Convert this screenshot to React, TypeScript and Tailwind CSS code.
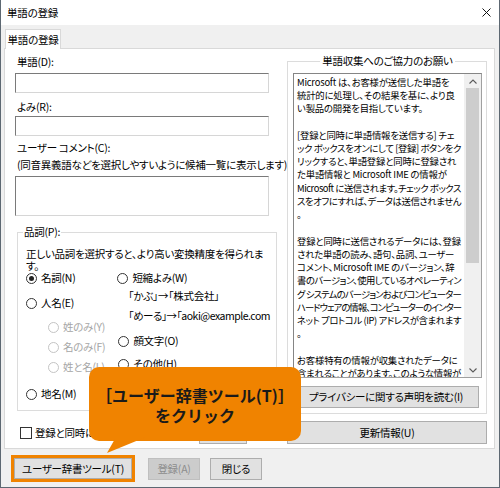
import React, { useLayoutEffect, useRef } from "react";

const msgLines = [
  "Microsoft は、お客様が送信した単語を",
  "統計的に処理し、その結果を基に、より良",
  "い製品の開発を目指しています。",
  "",
  "[登録と同時に単語情報を送信する] チェ",
  "ック ボックスをオンにして [登録] ボタンをク",
  "リックすると、単語登録と同時に登録され",
  "た単語情報と Microsoft IME の情報が",
  "Microsoft に送信されます。チェック ボックス",
  "スをオフにすれば、データは送信されません",
  "。",
  "",
  "登録と同時に送信されるデータには、登録",
  "された単語の読み、語句、品詞、ユーザー",
  "コメント、Microsoft IME のバージョン、辞",
  "書のバージョン、使用しているオペレーティン",
  "グ システムのバージョンおよびコンピューター",
  "ハードウェアの情報、コンピューターのインター",
  "ネット プロトコル (IP) アドレスが含まれます",
  "。",
  "",
  "お客様特有の情報が収集されたデータに",
  "含まれることがあります。このような情報が",
];

function Radio({ label, checked, disabled, className }: { label: string; checked?: boolean; disabled?: boolean; className?: string }) {
  return (
    <div className={`flex items-center h-[14px] gap-[4px] ${className ?? ""}`}>
      <span
        className={`w-[11px] h-[11px] rounded-full border bg-white flex items-center justify-center ${
          disabled ? "border-[#c4c4c4]" : "border-[#333333]"
        }`}
      >
        {checked && <span className="w-[5px] h-[5px] rounded-full bg-[#222222]" />}
      </span>
      <span className={`whitespace-nowrap ${disabled ? "text-[#a6a6a6]" : "text-black"}`}>{label}</span>
    </div>
  );
}

function Chevron({ up }: { up?: boolean }) {
  return (
    <svg width="8" height="5" viewBox="0 0 8 5">
      <polyline
        points={up ? "0.5,4.5 4,1 7.5,4.5" : "0.5,0.5 4,4 7.5,0.5"}
        fill="none"
        stroke="#5a5a5a"
        strokeWidth="1.1"
      />
    </svg>
  );
}

const sunken =
  "bg-white border border-t-[#7a7a7a] border-l-[#7a7a7a] border-r-[#d6d6d6] border-b-[#d6d6d6]";

export default function App() {
  const textRef = useRef<HTMLDivElement>(null);

  // squeeze the lines that run past the scroll box, like the narrow UI font does
  useLayoutEffect(() => {
    const box = textRef.current;
    if (!box) return;
    const max = 164;
    box.querySelectorAll<HTMLSpanElement>("span[data-line]").forEach((s) => {
      const w = s.getBoundingClientRect().width;
      if (w > max) {
        const n = (s.textContent ?? "").length || 1;
        s.style.letterSpacing = `${-0.2 + (max - w) / n}px`;
      }
    });
  }, []);

  return (
    <div className="relative w-[500px] h-[488px] overflow-hidden bg-[#f0f0f0] border-x border-b border-[#5d6872] text-[10.5px] tracking-[-0.25px] text-black font-['Noto_Sans_CJK_JP',sans-serif] [font-feature-settings:'palt']">
      {/* title bar */}
      <div className="h-[25px] bg-white flex items-center justify-between pl-[6px] pr-[8px]">
        <span className="text-[10.5px] tracking-[-0.2px]">単語の登録</span>
        <svg width="9" height="9" viewBox="0 0 9 9">
          <path d="M0.5 0.5 L8.5 8.5 M8.5 0.5 L0.5 8.5" stroke="#111" strokeWidth="1" />
        </svg>
      </div>

      {/* tab strip */}
      <div className="h-[23px] pt-[4px] pl-[4px]">
        <div className="relative z-10 w-[56px] h-[20px] bg-white border-l border-t border-r border-[#d9d9d9] flex items-center justify-center">
          単語の登録
        </div>
      </div>

      {/* tab panel */}
      <div className="ml-[3px] w-[491px] h-[401px] bg-white border border-[#d9d9d9] pt-[5px] pl-[10px] pr-[7px] flex gap-[10px]">
        {/* left column */}
        <div className="w-[262px] min-w-0 pt-[1px] flex flex-col">
          <div className="h-[14px] leading-[14px] ml-[2px]">単語(D):</div>
          <div className={`mt-[4px] w-[254px] h-[20px] ${sunken}`} />
          <div className="mt-[7px] h-[14px] leading-[14px] ml-[2px]">よみ(R):</div>
          <div className={`mt-[2px] w-[254px] h-[20px] ${sunken}`} />
          <div className="mt-[5px] h-[14px] leading-[14px] ml-[2px]">ユーザー コメント(C):</div>
          <div className="mt-[3px] h-[14px] leading-[14px] ml-[2px] whitespace-nowrap">
            (同音異義語などを選択しやすいように候補一覧に表示します)
          </div>
          <div className={`mt-[4px] w-[254px] h-[40px] ${sunken}`} />

          <fieldset className="mt-[9px] ml-[2px] w-[260px] min-w-0 border border-[#dcdcdc] pl-[8px] pr-[6px] pt-[9px] pb-[9px]">
            <legend className="-ml-[3px] px-[1px] h-[14px] leading-[14px]">品詞(P):</legend>
            <div className="leading-[11.5px]">
              <div className="whitespace-nowrap">正しい品詞を選択すると、より高い変換精度を得られま</div>
              <div>す。</div>
            </div>
            <div className="flex">
              <div className="w-[93px] flex flex-col">
                <Radio label="名詞(N)" checked />
                <Radio label="人名(E)" className="mt-[11px]" />
                <Radio label="姓のみ(Y)" disabled className="mt-[10px] ml-[22px]" />
                <Radio label="名のみ(F)" disabled className="mt-[6px] ml-[22px]" />
                <Radio label="姓と名(L)" disabled className="mt-[6px] ml-[22px]" />
                <Radio label="地名(M)" className="mt-[13px]" />
              </div>
              <div className="flex flex-col">
                <Radio label="短縮よみ(W)" />
                <div className="mt-[4px] ml-[11px] h-[14px] leading-[14px] whitespace-nowrap">「かぶ」→「株式会社」</div>
                <div className="mt-[6px] ml-[11px] h-[14px] leading-[14px] whitespace-nowrap tracking-[-0.5px]">「めーる」→「aoki@example.com</div>
                <Radio label="顔文字(O)" className="mt-[11px] ml-[1px]" />
                <Radio label="その他(H)" className="mt-[9px] ml-[1px]" />
              </div>
            </div>
          </fieldset>

          <div className="mt-[10px] h-[23px] flex items-center">
            <span className="ml-[5px] w-[12px] h-[12px] border border-[#333333] bg-white" />
            <span className="ml-[3px] whitespace-nowrap">登録と同時に単語情報を送信する(S)</span>
            <div className="ml-auto mr-[30px] w-[48px] h-[23px] bg-[#e1e1e1] border border-[#adadad]" />
          </div>
        </div>

        {/* right column */}
        <div className="w-[200px] min-w-0 flex flex-col">
          <fieldset className="w-[200px] min-w-0 border border-[#dcdcdc] pl-[5px] pr-[4px] pt-[5px] pb-[5px]">
            <legend className="mx-auto px-[2px] h-[14px] leading-[14px]">単語収集へのご協力のお願い</legend>
            <div className="w-[189px] h-[305px] flex border border-[#a0a0a0] border-t-[#858585] border-l-[#858585] bg-white">
              <div
                ref={textRef}
                className="flex-1 min-w-0 overflow-hidden pl-[3px] pt-[1.5px] text-[9.4px] tracking-[-0.2px] leading-[13.25px]"
              >
                {msgLines.map((l, i) => (
                  <div key={i} className="whitespace-nowrap h-[13.25px]">
                    {l === "" ? "\u00a0" : <span data-line="">{l}</span>}
                  </div>
                ))}
              </div>
              <div className="w-[17px] shrink-0 bg-[#f0f0f0] flex flex-col">
                <div className="h-[14px] flex items-center justify-center">
                  <Chevron up />
                </div>
                <div className="mx-[2px] h-[175px] bg-[#cdcdcd]" />
                <div className="flex-1" />
                <div className="h-[14px] flex items-center justify-center">
                  <Chevron />
                </div>
              </div>
            </div>
            <div className="mt-[8px] w-[186px] h-[22px] bg-[#e1e1e1] border border-[#adadad] flex items-center justify-center whitespace-nowrap">
              プライバシーに関する声明を読む(I)
            </div>
          </fieldset>
          <div className="mt-[7px] h-[23px] bg-[#e1e1e1] border border-[#adadad] flex items-center justify-center">
            更新情報(U)
          </div>
        </div>
      </div>

      {/* bottom buttons */}
      <div className="pt-[6px] pl-[10px] flex items-start">
        <div className="border-[3px] border-[#f08300]">
          <div className="w-[118px] h-[21px] bg-[#e1e1e1] border border-[#adadad] flex items-center justify-center whitespace-nowrap">
            ユーザー辞書ツール(T)
          </div>
        </div>
        <div className="ml-[13px] mt-[3px] w-[52px] h-[22px] bg-[#cccccc] border border-[#bfbfbf] text-[#8c8c8c] flex items-center justify-center">
          登録(A)
        </div>
        <div className="ml-[10px] mt-[3px] w-[52px] h-[22px] bg-[#e1e1e1] border border-[#adadad] flex items-center justify-center">
          閉じる
        </div>
      </div>

      {/* callout */}
      <div className="absolute left-[88px] top-[367px] w-[212px] h-[74px] rounded-[10px] bg-[#f08300] flex flex-col items-center justify-center pt-[2px] text-[16px] leading-[20px] font-bold tracking-normal text-[#1a1a1a] [font-feature-settings:normal]">
        <div className="whitespace-nowrap">［ユーザー辞書ツール(T)］</div>
        <div className="whitespace-nowrap">をクリック</div>
      </div>
      <svg className="absolute left-[104px] top-[437px]" width="44" height="17" viewBox="0 0 44 17">
        <polygon points="11,0 41,0 2,16" fill="#f08300" />
      </svg>
    </div>
  );
}
